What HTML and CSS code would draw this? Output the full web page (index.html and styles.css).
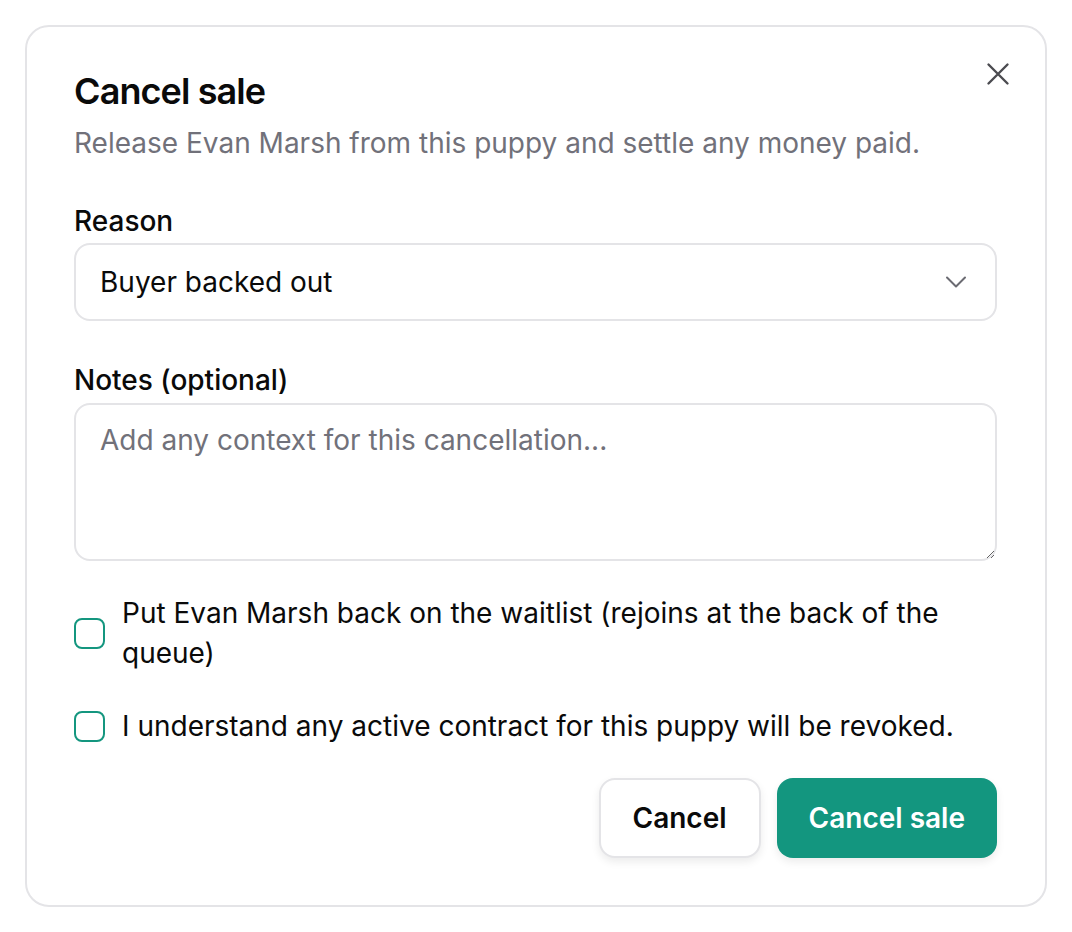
FILE: index.html
```html
<!DOCTYPE html>
<html lang="en">
<head>
<meta charset="utf-8">
<title>Cancel sale</title>
<link rel="stylesheet" href="styles.css">
</head>
<body>
<div class="dialog">
  <button class="close" aria-label="Close">
    <svg width="24" height="24" viewBox="0 0 24 24" fill="none" stroke="currentColor" stroke-width="2.4" stroke-linecap="round"><path d="M2.5 2.5l19 19M21.5 2.5l-19 19"/></svg>
  </button>
  <h2 class="title">Cancel sale</h2>
  <p class="desc">Release Evan Marsh from this puppy and settle any money paid.</p>

  <div class="field field-reason">
    <label class="label">Reason</label>
    <div class="select">
      <span>Buyer backed out</span>
      <svg width="22" height="12" viewBox="0 0 22 12" fill="none" stroke="currentColor" stroke-width="2" stroke-linecap="round" stroke-linejoin="round"><path d="M2 1.5l9 9 9-9"/></svg>
    </div>
  </div>

  <div class="field field-notes">
    <label class="label">Notes (optional)</label>
    <textarea class="textarea" placeholder="Add any context for this cancellation..."></textarea>
  </div>

  <div class="checks">
    <label class="check">
      <input type="checkbox" class="box">
      <span>Put Evan Marsh back on the waitlist (rejoins at the back of the queue)</span>
    </label>
    <label class="check">
      <input type="checkbox" class="box">
      <span>I understand any active contract for this puppy will be revoked.</span>
    </label>
  </div>

  <div class="actions">
    <button class="btn btn-secondary">Cancel</button>
    <button class="btn btn-primary">Cancel sale</button>
  </div>
</div>
</body>
</html>
```
FILE: styles.css
```css
* { box-sizing: border-box; }
html, body { margin: 0; padding: 0; background: #ffffff; }
body {
  font-family: Inter, "Noto Sans", sans-serif;
  color: #0a0a0a;
  padding: 25px;
}
.dialog {
  position: relative;
  border: 2px solid #e4e4e7;
  border-radius: 24px;
  background: #fff;
  padding: 40px 48px 47px 47px;
}
.close {
  position: absolute;
  top: 35px;
  right: 35px;
  width: 24px;
  height: 24px;
  padding: 0;
  border: 0;
  background: transparent;
  color: #4b4b50;
  display: flex;
}
.title {
  margin: 0;
  font-size: 36px;
  line-height: 48px;
  font-weight: 600;
  letter-spacing: -0.9px;
}
.desc {
  margin: 8px 0 0;
  font-size: 28px;
  line-height: 40px;
  color: #71717a;
}
.field { display: flex; flex-direction: column; }
.field-reason { margin-top: 38px; }
.field-notes { margin-top: 39px; }
.label {
  font-size: 28px;
  line-height: 40px;
  font-weight: 500;
  margin-bottom: 2px;
}
.field-notes .label { margin-bottom: 3px; }
.select {
  height: 78px;
  border: 2px solid #e4e4e7;
  border-radius: 16px;
  display: flex;
  align-items: center;
  justify-content: space-between;
  padding: 0 28px 0 24px;
  font-size: 28px;
  line-height: 40px;
}
.select svg { color: #6b6b72; }
.textarea {
  height: 158px;
  border: 2px solid #e4e4e7;
  border-radius: 16px;
  padding: 15px 24px;
  font-family: Inter, "Noto Sans", sans-serif;
  font-size: 28px;
  line-height: 40px;
  color: #0a0a0a;
  resize: vertical;
  outline: none;
}
.textarea::placeholder { color: #71717a; }
.checks {
  margin-top: 32px;
  display: flex;
  flex-direction: column;
  gap: 33px;
}
.check {
  display: flex;
  align-items: center;
  gap: 17px;
  font-size: 28px;
  line-height: 40px;
}
.box {
  appearance: none;
  -webkit-appearance: none;
  margin: 0;
  flex: 0 0 auto;
  width: 31px;
  height: 31px;
  border: 2px solid #14967f;
  border-radius: 8px;
  background: #fff;
}
.actions {
  margin-top: 32px;
  display: flex;
  justify-content: flex-end;
  gap: 16px;
}
.btn {
  height: 80px;
  padding: 0 32px;
  border-radius: 16px;
  font-family: Inter, "Noto Sans", sans-serif;
  font-size: 28px;
  font-weight: 600;
  box-shadow: 0 4px 8px rgba(0, 0, 0, 0.08);
}
.btn-secondary {
  background: #fff;
  color: #0a0a0a;
  border: 2px solid #e4e4e7;
}
.btn-primary {
  background: #13967f;
  color: #fff;
  border: 0;
}
```
